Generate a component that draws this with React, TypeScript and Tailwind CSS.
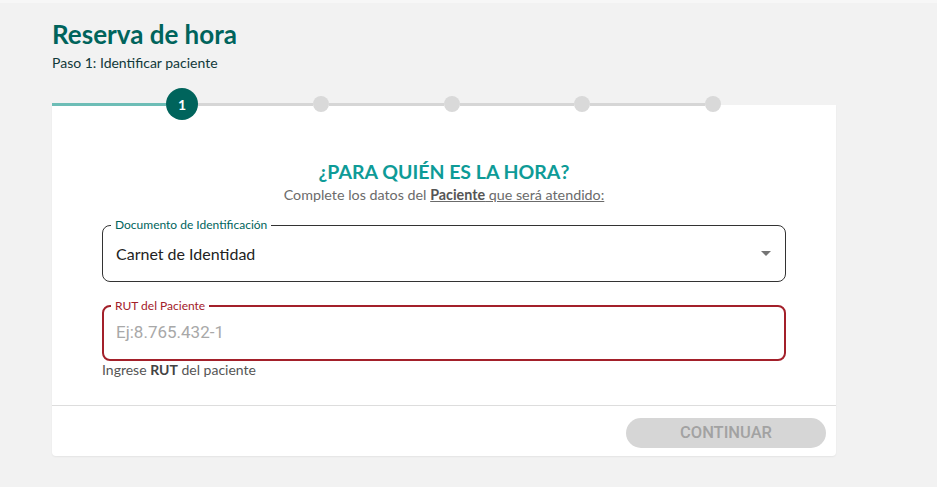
export default function App() {
  const dots = [1, 2, 3, 4];

  return (
    <div className="min-h-screen bg-[#f2f2f2] font-['Lato',sans-serif] border-t-[3px] border-[#f7f7f7]">
      <div className="ml-[52px] w-[784px] pt-[16px]">
        {/* Header */}
        <h1 className="text-[26px] leading-[30px] font-bold text-[#00645c]">Reserva de hora</h1>
        <p className="mt-[5px] text-[14px] leading-[18px] text-[#10393a]">Paso 1: Identificar paciente</p>

        {/* Stepper */}
        <div className="relative z-10 mt-[16px] flex h-[32px] w-[669px] items-center">
          <div className="h-[3px] w-[114px] bg-[#6dbdb6]" />
          <div className="flex h-[32px] w-[32px] shrink-0 items-center justify-center rounded-full bg-[#00645c] text-[14px] font-bold text-white">
            1
          </div>
          {dots.map((d) => (
            <div key={d} className="flex flex-1 items-center">
              <div className="h-[3px] flex-1 bg-[#d6d6d6]" />
              <div className="h-[16px] w-[16px] shrink-0 rounded-full bg-[#d9d9d9]" />
            </div>
          ))}
        </div>

        {/* Card */}
        <div className="-mt-[15px] rounded-b-[4px] bg-white shadow-[0_1px_2px_rgba(0,0,0,0.06)]">
          <div className="px-[50px] pt-[53px] pb-[26px]">
            <h2 className="text-center text-[19.5px] leading-[28px] font-bold text-[#0e9b97]">
              ¿PARA QUIÉN ES LA HORA?
            </h2>
            <p className="text-center text-[14.3px] leading-[18px] text-[#6b6b6b]">
              Complete los datos del{" "}
              <span className="underline">
                <b className="font-bold text-[#555]">Paciente</b> que será atendido:
              </span>
            </p>

            {/* Document select */}
            <fieldset className="mt-[14px] h-[64px] rounded-[8px] border border-[#333] px-[8px]">
              <legend className="px-[4px] text-[12px] leading-[14px] text-[#00645c]">
                Documento de Identificación
              </legend>
              <div className="flex h-[47px] items-center justify-between pb-[4px] pl-[5px] pr-[6px]">
                <span className="text-[16px] text-[#222]">Carnet de Identidad</span>
                <svg width="10" height="5" viewBox="0 0 10 5">
                  <path d="M0 0h10L5 5z" fill="#757575" />
                </svg>
              </div>
            </fieldset>

            {/* RUT input */}
            <fieldset className="mt-[17px] h-[62px] rounded-[8px] border-2 border-[#a3202a] px-[7px]">
              <legend className="px-[4px] text-[12px] leading-[14px] text-[#a3202a]">
                RUT del Paciente
              </legend>
              <div className="flex h-[44px] items-center pb-[4px] pl-[5px]">
                <span className="font-['Roboto',sans-serif] text-[17px] text-[#a8a8a8]">Ej:8.765.432-1</span>
              </div>
            </fieldset>
            <p className="text-[14px] leading-[18px] text-[#555]">
              Ingrese <b className="font-bold text-[#444]">RUT</b> del paciente
            </p>
          </div>

          {/* Actions */}
          <div className="flex justify-end border-t border-[#dddddd] px-[10px] pt-[12px] pb-[8px]">
            <button className="h-[30px] w-[200px] rounded-full bg-[#d6d6d6] font-['Roboto',sans-serif] text-[16.5px] font-medium text-[#a2a2a2]">
              CONTINUAR
            </button>
          </div>
        </div>
      </div>
    </div>
  );
}
